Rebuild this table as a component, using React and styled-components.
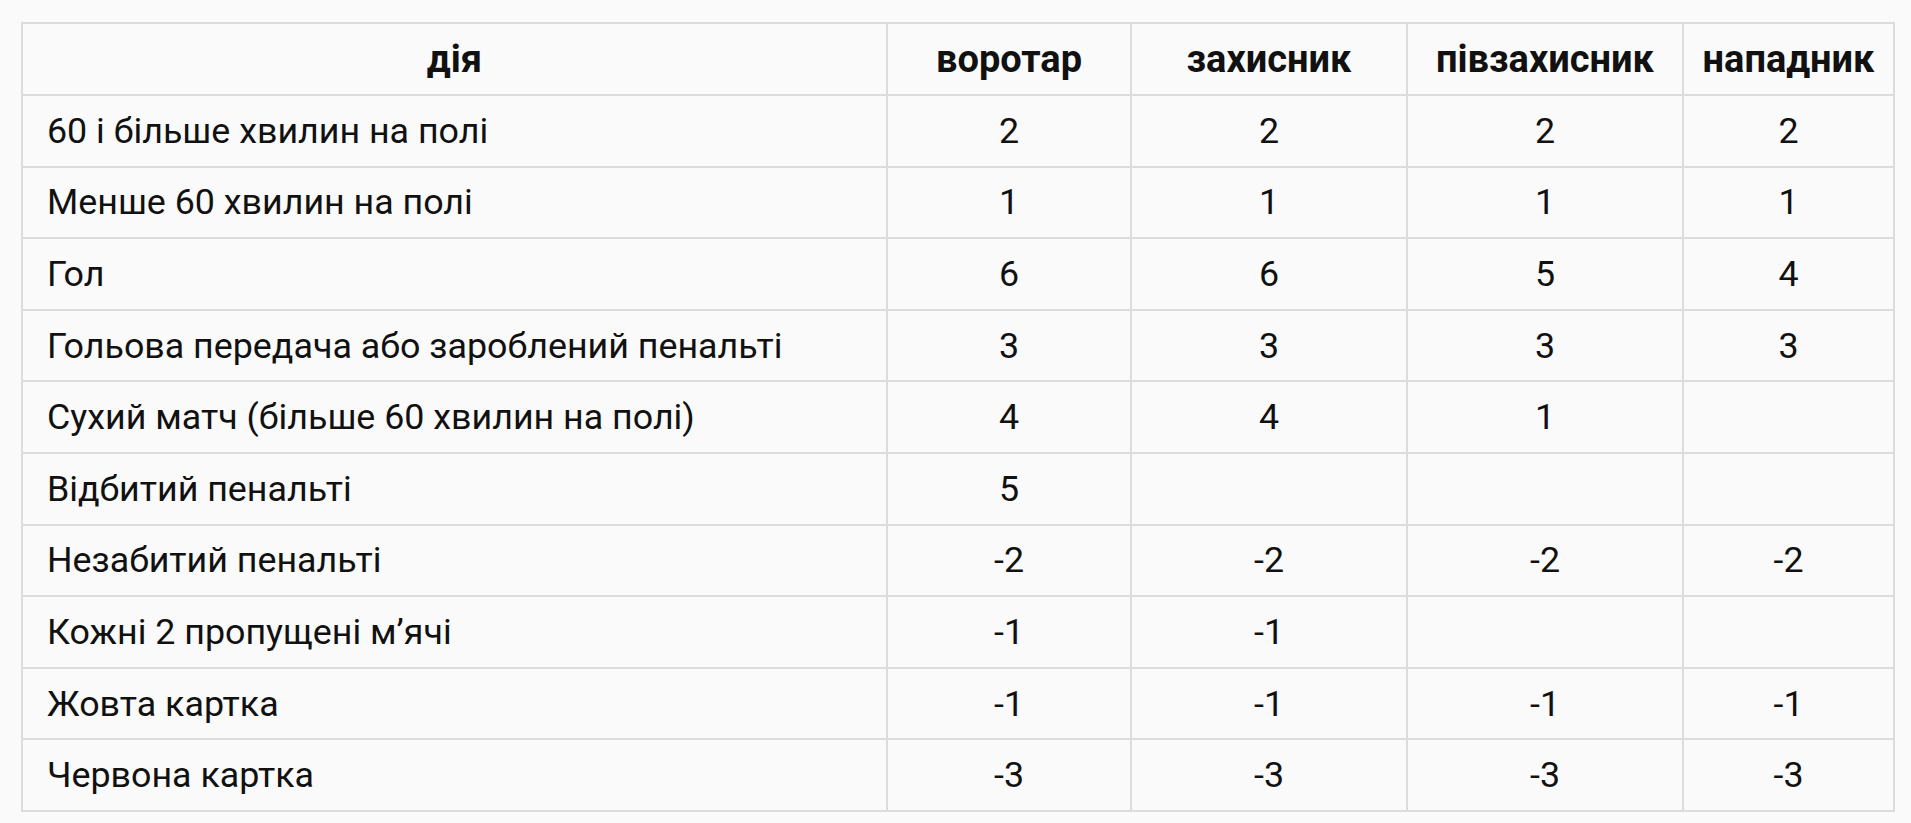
import React from "react";
import styled, { createGlobalStyle } from "styled-components";

const Global = createGlobalStyle`
  html, body { margin: 0; padding: 0; background: #fafafa; }
  body { font-family: Roboto, "Liberation Sans", sans-serif; color: #111; }
`;

const Page = styled.div`
  padding: 22px 18px 14px 21px;
`;

const Table = styled.table`
  width: 1872px;
  table-layout: fixed;
  border-collapse: collapse;
  background: #fafafa;
  border: 2px solid #dcdcdc;
`;

const Col = styled.col`
  width: ${(p) => p.$w}px;
`;

const Th = styled.th`
  height: 70px;
  padding: 0 6px;
  border: 2px solid #dcdcdc;
  font-weight: 700;
  font-size: 38px;
  text-align: center;
  vertical-align: middle;
  color: #111;
  white-space: nowrap;
`;

const Td = styled.td`
  height: 69.6px;
  padding: 0 ${(p) => (p.$left ? "24px" : "10px")};
  border: 2px solid #dcdcdc;
  font-size: 35.8px;
  text-align: ${(p) => (p.$left ? "left" : "center")};
  vertical-align: middle;
  color: #111;
  white-space: nowrap;
`;

const headers = ["дія", "воротар", "захисник", "півзахисник", "нападник"];
const widths = [865, 244, 276, 276, 211];

const rows = [
  ["60 і більше хвилин на полі", "2", "2", "2", "2"],
  ["Менше 60 хвилин на полі", "1", "1", "1", "1"],
  ["Гол", "6", "6", "5", "4"],
  ["Гольова передача або зароблений пенальті", "3", "3", "3", "3"],
  ["Сухий матч (більше 60 хвилин на полі)", "4", "4", "1", ""],
  ["Відбитий пенальті", "5", "", "", ""],
  ["Незабитий пенальті", "-2", "-2", "-2", "-2"],
  ["Кожні 2 пропущені м’ячі", "-1", "-1", "", ""],
  ["Жовта картка", "-1", "-1", "-1", "-1"],
  ["Червона картка", "-3", "-3", "-3", "-3"],
];

export default function App() {
  return (
    <>
      <Global />
      <Page>
        <Table>
          <colgroup>
            {widths.map((w, i) => (
              <Col key={i} $w={w} />
            ))}
          </colgroup>
          <thead>
            <tr>
              {headers.map((h) => (
                <Th key={h}>{h}</Th>
              ))}
            </tr>
          </thead>
          <tbody>
            {rows.map((r, i) => (
              <tr key={i}>
                {r.map((c, j) => (
                  <Td key={j} $left={j === 0}>
                    {c}
                  </Td>
                ))}
              </tr>
            ))}
          </tbody>
        </Table>
      </Page>
    </>
  );
}
